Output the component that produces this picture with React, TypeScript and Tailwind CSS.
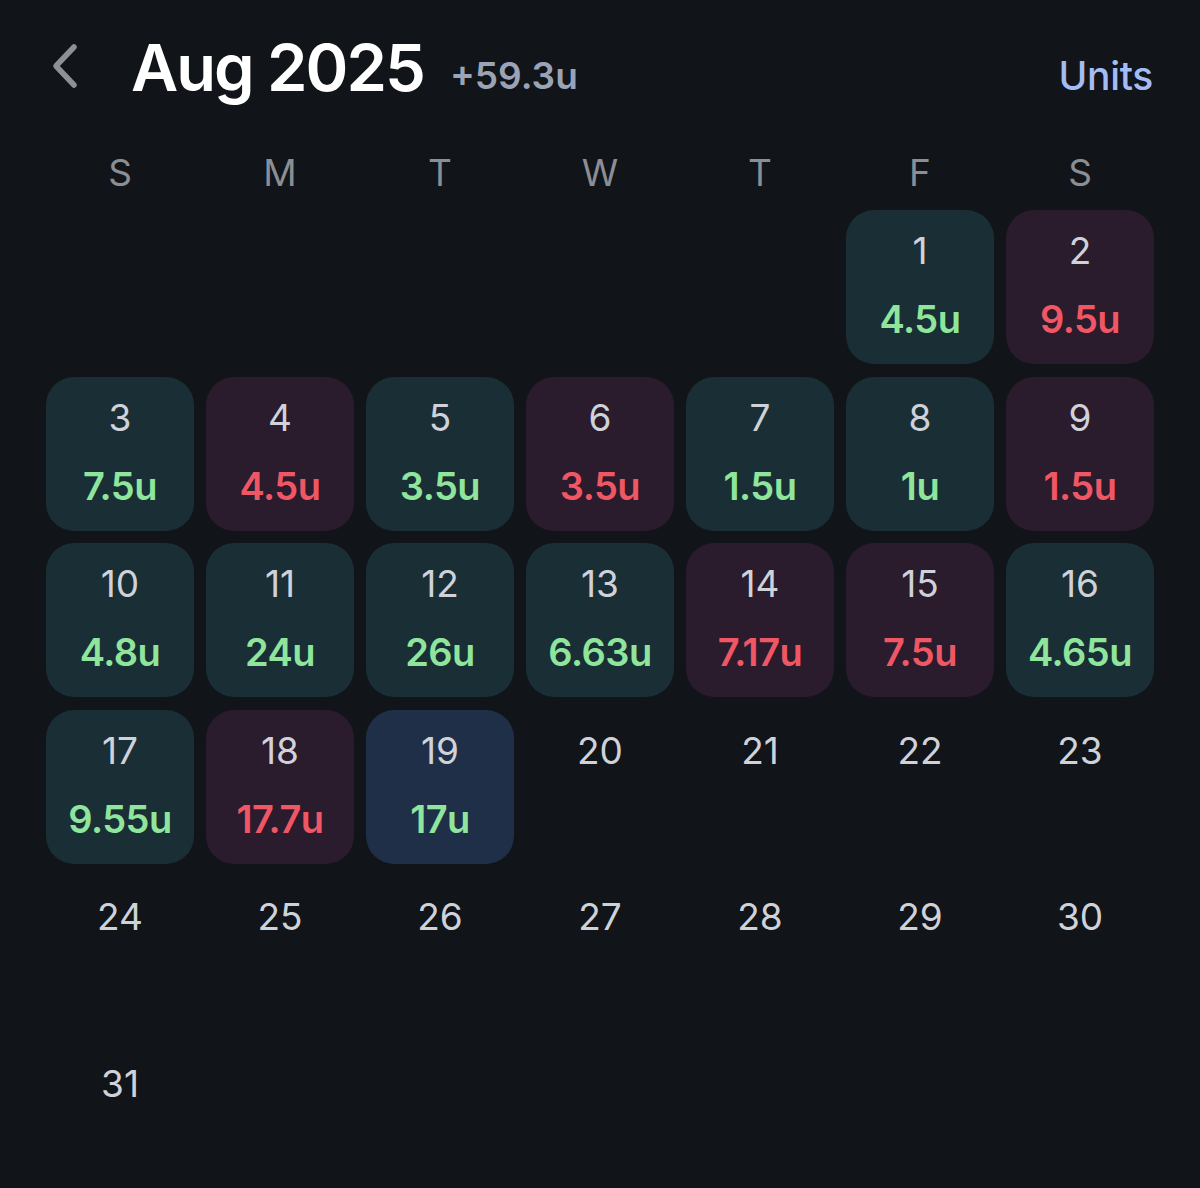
import { FC } from 'react';

type Kind = 'win' | 'loss' | 'today' | 'none';

interface Day {
  day: number | null;
  value?: string;
  kind: Kind;
}

const data: Record<number, { value: string; kind: Kind }> = {
  1: { value: '4.5u', kind: 'win' },
  2: { value: '9.5u', kind: 'loss' },
  3: { value: '7.5u', kind: 'win' },
  4: { value: '4.5u', kind: 'loss' },
  5: { value: '3.5u', kind: 'win' },
  6: { value: '3.5u', kind: 'loss' },
  7: { value: '1.5u', kind: 'win' },
  8: { value: '1u', kind: 'win' },
  9: { value: '1.5u', kind: 'loss' },
  10: { value: '4.8u', kind: 'win' },
  11: { value: '24u', kind: 'win' },
  12: { value: '26u', kind: 'win' },
  13: { value: '6.63u', kind: 'win' },
  14: { value: '7.17u', kind: 'loss' },
  15: { value: '7.5u', kind: 'loss' },
  16: { value: '4.65u', kind: 'win' },
  17: { value: '9.55u', kind: 'win' },
  18: { value: '17.7u', kind: 'loss' },
  19: { value: '17u', kind: 'today' },
};

const weekdays = ['S', 'M', 'T', 'W', 'T', 'F', 'S'];

const buildDays = (): Day[] => {
  const days: Day[] = [];
  for (let i = 0; i < 5; i++) days.push({ day: null, kind: 'none' });
  for (let d = 1; d <= 31; d++) {
    const entry = data[d];
    days.push(entry ? { day: d, value: entry.value, kind: entry.kind } : { day: d, kind: 'none' });
  }
  return days;
};

const tileBg: Record<Kind, string> = {
  win: 'bg-[#1a2e36]',
  loss: 'bg-[#2a1b2d]',
  today: 'bg-[#1f2f48]',
  none: '',
};

const DayCell: FC<{ item: Day }> = ({ item }) => {
  if (item.day === null) return <div className="h-[154px]" />;
  const valueColor = item.kind === 'loss' ? 'text-[#ef5764]' : 'text-[#8fe59c]';
  return (
    <div className={`h-[154px] rounded-[28px] flex flex-col items-center pt-[22px] ${tileBg[item.kind]}`}>
      <span className="text-[37px] leading-none text-[#cfd2d8]">{item.day}</span>
      {item.value && (
        <span className={`mt-[31px] text-[38px] leading-none font-semibold tracking-[-0.5px] ${valueColor}`}>
          {item.value}
        </span>
      )}
    </div>
  );
};

const App: FC = () => {
  const days = buildDays();
  return (
    <div
      className="w-[1200px] h-[1188px] bg-[#111419] overflow-hidden px-[46px]"
      style={{ fontFamily: 'Inter, "Noto Sans", sans-serif' }}
    >
      <div className="h-[136px] flex items-center">
        <svg width="30" height="48" viewBox="0 0 30 48" className="ml-[4px] mb-[4px]">
          <polyline
            points="24,5 6,24 24,43"
            fill="none"
            stroke="#8d9096"
            strokeWidth="5.5"
            strokeLinecap="round"
            strokeLinejoin="round"
          />
        </svg>
        <span className="ml-[51px] text-[65px] font-semibold text-white tracking-[-2px] leading-none mb-[2px]">
          Aug 2025
        </span>
        <span className="ml-[26px] mt-[14px] text-[37px] font-semibold text-[#9ba3b7] leading-none">
          +59.3u
        </span>
        <span className="ml-auto mr-[1px] mt-[14px] text-[39px] font-medium text-[#a3bcf4] leading-none tracking-[-0.3px]">
          Units
        </span>
      </div>
      <div className="grid grid-cols-7 gap-x-[12px] h-[74px] items-center pb-[2px]">
        {weekdays.map((w, i) => (
          <div key={i} className="text-center text-[37px] leading-none text-[#8b8e94]">
            {w}
          </div>
        ))}
      </div>
      <div className="grid grid-cols-7 gap-x-[12px] gap-y-[12.5px]">
        {days.map((item, i) => (
          <DayCell key={i} item={item} />
        ))}
      </div>
    </div>
  );
};

export default App;
